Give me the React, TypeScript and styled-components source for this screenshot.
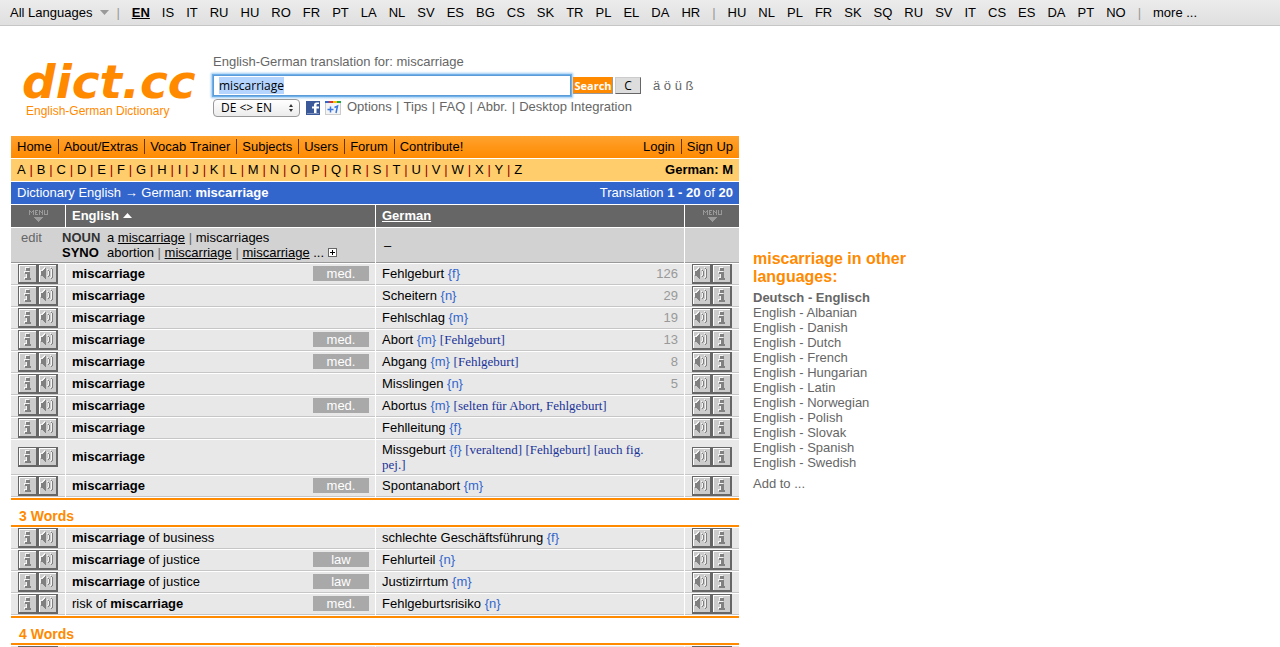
import React, { useEffect, useRef } from 'react';
import styled, { createGlobalStyle, css } from 'styled-components';

const Global = createGlobalStyle`
  * { box-sizing: border-box; }
  body {
    margin: 0;
    background: #fff;
    color: #000;
    font: 13px/15px "Liberation Sans", Arial, sans-serif;
    overflow-x: hidden;
  }
  a { color: inherit; text-decoration: none; }
`;

const LangBar = styled.nav`
  display: flex;
  align-items: center;
  gap: 12px;
  height: 26px;
  padding-left: 10px;
  background: linear-gradient(#ececec, #dfdfdf);
  border-bottom: 1px solid #c6c6c6;
  white-space: nowrap;
`;
const AllLanguages = styled.a`
  display: flex;
  align-items: center;
  gap: 8px;
  margin-right: -5px;
`;
const LangLink = styled.a<{ $current?: boolean }>`
  ${(p) => p.$current && css`font-weight: bold; text-decoration: underline;`}
`;
const BarMark = styled.span`color: #999;`;

const Header = styled.header`
  display: flex;
  gap: 16px;
  padding: 28px 0 18px 22px;
  color: #666;
`;
const Brand = styled.a`
  width: 175px;
  color: #ff8a00;
`;
const LogoName = styled.div`
  padding-top: 6px;
  font: italic bold 47px/44px "DejaVu Sans", Verdana, sans-serif;
  white-space: nowrap;
`;
const LogoNote = styled.div`
  padding-left: 4px;
  font-size: 12px;
  line-height: 14px;
`;
const SearchForm = styled.form`
  display: flex;
  flex-direction: column;
`;
const SearchRow = styled.div`
  display: flex;
  align-items: center;
  height: 25px;
  margin-top: 4px;
`;
const SearchInput = styled.input`
  width: 358px;
  height: 21px;
  padding: 0 5px;
  border: 1px solid #5a9bd8;
  outline: none;
  box-shadow: 0 0 0 1px #6fb0e8, 0 0 2px 2px #9ccaf2;
  font: 12px "Open Sans", "Lucida Grande", sans-serif;
  color: #000;
  &::selection { background: #b5d5ff; color: #000; }
`;
const FormButton = styled.button<{ $primary?: boolean }>`
  height: 17px;
  padding: 0;
  border: 1px solid;
  border-color: #ccc #666 #666 #ccc;
  background: #ddd;
  color: #000;
  width: 26px;
  margin-left: 2px;
  font: 12px/15px "Open Sans", "Lucida Grande", sans-serif;
  ${(p) => p.$primary && css`
    width: 40px;
    border-color: #ff8a00 #999 #999 #ff8a00;
    background: #ff8a00;
    color: #fff;
    font-size: 11px;
    font-weight: bold;
  `}
`;
const Umlauts = styled.span`margin-left: 12px;`;
const OptionsRow = styled.div`
  display: flex;
  align-items: center;
  height: 19px;
  gap: 5px;
`;
const SelectWrap = styled.span`
  position: relative;
  display: flex;
  margin-right: 1px;
`;
const DirectionSelect = styled.select`
  appearance: none;
  width: 87px;
  height: 18px;
  padding: 0 7px;
  border: 1px solid #999;
  border-radius: 4px;
  background: linear-gradient(#fff, #ececec);
  font: 12px/16px "Open Sans", "Lucida Grande", sans-serif;
  color: #000;
`;
const SelectArrows = styled.svg`
  position: absolute;
  right: 6px;
  top: 5px;
  pointer-events: none;
`;
const OptionLinks = styled.span`
  display: flex;
  justify-content: space-between;
  width: 286px;
  padding: 0 0 2px 1px;
`;

const Body = styled.div`
  display: flex;
  align-items: flex-start;
  padding-left: 11px;
  gap: 14px;
`;
const Main = styled.main`
  flex: 0 0 728px;
  display: flex;
  flex-direction: column;
  gap: 1px;
`;
const Strip = styled.div<{ $tone: 'nav' | 'alpha' | 'title' }>`
  display: flex;
  align-items: center;
  justify-content: space-between;
  height: 22px;
  padding: 0 6px 1px;
  ${(p) => p.$tone === 'nav' && css`background: linear-gradient(#ffa22e, #ff8a00);`}
  ${(p) => p.$tone === 'alpha' && css`background: #ffcd6b;`}
  ${(p) => p.$tone === 'title' && css`background: #36c; color: #fff;`}
`;
const NavGroup = styled.nav`
  display: flex;
  white-space: pre;
`;
const Letters = styled.nav`
  display: flex;
  justify-content: space-between;
  width: 506px;
`;
const NavLink = styled.a`
  & + & {
    margin-left: 6px;
    padding-left: 5px;
    border-left: 1px solid #663700;
  }
`;
const Red = styled.span`color: #900;`;

const ResultTable = styled.table`
  width: 100%;
  table-layout: fixed;
  border-collapse: separate;
  border-spacing: 0;
`;
const MenuCol = styled.col`width: 54px;`;
const MenuColRight = styled.col`width: 55px;`;
const TermCol = styled.col`width: 310px;`;
const HeadCell = styled.th`
  height: 23px;
  padding: 0 6px 2px;
  background: #666;
  border-bottom: 1px solid #fff;
  color: #fff;
  text-align: left;
  & + & { border-left: 1px solid #fff; }
`;
const Row = styled.tr`
  & > td {
    height: 22px;
    padding: 0 6px;
    background: #e8e8e8;
    border-bottom: 1px solid #fff;
    box-shadow: inset 0 -1px #c6c6c6;
  }
  & > td + td { border-left: 1px solid #fff; }
`;
const FormsRow = styled(Row)`
  & > td {
    height: 36px;
    background: #d2d2d2;
    box-shadow: inset 0 -1px #999;
  }
`;
const Dash = styled.span`padding-left: 2px;`;
const Forms = styled.div`
  display: grid;
  grid-template-columns: 41px 45px 1fr;
  padding: 2px 0 3px 4px;
`;
const FormKey = styled.b<{ $soft?: boolean }>`
  color: ${(p) => (p.$soft ? '#333' : '#000')};
`;
const Muted = styled.span`color: #666;`;
const Under = styled.a`text-decoration: underline;`;
const TermLine = styled.div`
  display: flex;
  align-items: center;
  justify-content: space-between;
  padding-bottom: 2px;
`;
const GermanText = styled.div<{ $tall?: boolean }>`
  padding: ${(p) => (p.$tall ? '2px 0 1px' : '0')};
  margin-right: ${(p) => (p.$tall ? '20px' : '0')};
`;
const Tag = styled.span`
  width: 56px;
  height: 15px;
  background: #a9a9a9;
  color: #fff;
  text-align: center;
`;
const Gender = styled.span`color: #36c;`;
const Note = styled.span`
  color: #1a3399;
  font-family: "Liberation Serif", "Times New Roman", serif;
`;
const Votes = styled.span`color: #999;`;
const Buttons = styled.div`
  display: flex;
  padding: 0 0 1px 1px;
`;
const IconButton = styled.button`
  display: block;
  width: 20px;
  height: 20px;
  padding: 0;
  border: 0;
  background: none;
`;
const MenuSvg = styled.svg`
  display: block;
  margin: 2px auto 0;
`;
const GroupTitle = styled.h2`
  margin: 0;
  height: 29px;
  padding: 8px 8px 0;
  border: solid #ff8a00;
  border-width: 2px 0;
  color: #ff8a00;
  font-size: 14px;
  line-height: 16px;
`;
const GroupCell = styled.td`padding: 0 0 1px;`;

const Side = styled.aside`
  width: 180px;
  margin-top: 114px;
  color: #666;
`;
const SideTitle = styled.h2`
  margin: 0 0 4px;
  color: #ff8a00;
  font-size: 16px;
  line-height: 18px;
`;
const SideList = styled.ul`
  margin: 0 0 6px;
  padding: 0;
  list-style: none;
`;

const firstLangs = 'EN IS IT RU HU RO FR PT LA NL SV ES BG CS SK TR PL EL DA HR'.split(' ');
const moreLangs = 'HU NL PL FR SK SQ RU SV IT CS ES DA PT NO'.split(' ');
const letters = 'ABCDEFGHIJKLMNOPQRSTUVWXYZ'.split('');
const navItems = ['Home', 'About/Extras', 'Vocab Trainer', 'Subjects', 'Users', 'Forum', 'Contribute!'];
const options = ['Options', 'Tips', 'FAQ', 'Abbr.', 'Desktop Integration'];
const others = 'Albanian Danish Dutch French Hungarian Latin Norwegian Polish Slovak Spanish Swedish'.split(' ');

interface Entry {
  before?: string;
  after?: string;
  tag?: string;
  de: string;
  g: string;
  note?: string;
  votes?: number;
  tall?: boolean;
}
const single: Entry[] = [
  { tag: 'med.', de: 'Fehlgeburt', g: 'f', votes: 126 },
  { de: 'Scheitern', g: 'n', votes: 29 },
  { de: 'Fehlschlag', g: 'm', votes: 19 },
  { tag: 'med.', de: 'Abort', g: 'm', note: '[Fehlgeburt]', votes: 13 },
  { tag: 'med.', de: 'Abgang', g: 'm', note: '[Fehlgeburt]', votes: 8 },
  { de: 'Misslingen', g: 'n', votes: 5 },
  { tag: 'med.', de: 'Abortus', g: 'm', note: '[selten für Abort, Fehlgeburt]' },
  { de: 'Fehlleitung', g: 'f' },
  { de: 'Missgeburt', g: 'f', note: '[veraltend] [Fehlgeburt] [auch fig. pej.]', tall: true },
  { tag: 'med.', de: 'Spontanabort', g: 'm' },
];
const threeWords: Entry[] = [
  { after: ' of business', de: 'schlechte Geschäftsführung', g: 'f' },
  { after: ' of justice', tag: 'law', de: 'Fehlurteil', g: 'n' },
  { after: ' of justice', tag: 'law', de: 'Justizirrtum', g: 'm' },
  { before: 'risk of ', tag: 'med.', de: 'Fehlgeburtsrisiko', g: 'n' },
];

// Bitmap icons: every "#" becomes one filled pixel.
const pixels = (rows: string[]) =>
  rows
    .flatMap((r, y) => r.split('').map((c, x) => (c === '#' ? `M${x} ${y}h1v1h-1z` : '')))
    .join('');

const menuShape = pixels([
  '#...#.###.#..#.#..#',
  '##.##.#...##.#.#..#',
  '#.#.#.##..#.##.#..#',
  '#...#.#...#..#.#..#',
  '#...#.###.#..#.####',
  '',
  '',
  '.....#########',
  '......#######',
  '.......#####',
  '........###',
  '.........#',
]);
const infoShape = pixels([
  '',
  '',
  '',
  '',
  '........####',
  '........####',
  '........####',
  '',
  '.......#####',
  '.......#####',
  '.........###',
  '.........###',
  '.........###',
  '.........###',
  '.......######',
  '.......######',
]);
const soundShape = pixels([
  '',
  '',
  '',
  '',
  '.......#.....#',
  '......##......#',
  '.....###..#...#',
  '...#####...#..#',
  '...#####...#..#',
  '...#####...#..#',
  '...#####...#..#',
  '...#####...#..#',
  '.....###..#...#',
  '......##......#',
  '.......#.....#',
]);

const BitmapIcon = ({ shape }: { shape: string }) => (
  <svg width="20" height="20" shapeRendering="crispEdges" aria-hidden="true">
    <rect width="20" height="20" fill="#666" />
    <rect x="1" y="1" width="17" height="17" fill="#fff" />
    <rect x="2" y="2" width="16" height="16" fill="#ccc" />
    <path d={shape} fill="#f4f4f4" transform="translate(-1 -1)" />
    <path d={shape} fill="#808080" />
  </svg>
);
const MenuIcon = () => (
  <MenuSvg width="19" height="12" shapeRendering="crispEdges" role="img" aria-label="Menu">
    <path d={menuShape} fill="#999" />
  </MenuSvg>
);
const InfoButton = () => <IconButton type="button" aria-label="Info"><BitmapIcon shape={infoShape} /></IconButton>;
const SoundButton = () => <IconButton type="button" aria-label="Listen"><BitmapIcon shape={soundShape} /></IconButton>;

const EntryRow = ({ e }: { e?: Entry }) => (
  <Row>
    <td><Buttons><InfoButton /><SoundButton /></Buttons></td>
    <td>
      {e && (
        <TermLine>
          <span>{e.before}<b>miscarriage</b>{e.after}</span>
          {e.tag && <Tag>{e.tag}</Tag>}
        </TermLine>
      )}
    </td>
    <td>
      {e && (
        <TermLine>
          <GermanText $tall={e.tall}>
            {e.de} <Gender>{`{${e.g}}`}</Gender>{e.note && <> <Note>{e.note}</Note></>}
          </GermanText>
          {e.votes && <Votes>{e.votes}</Votes>}
        </TermLine>
      )}
    </td>
    <td><Buttons><SoundButton /><InfoButton /></Buttons></td>
  </Row>
);
const GroupHeading = ({ title }: { title: string }) => (
  <tr><GroupCell colSpan={4}><GroupTitle>{title}</GroupTitle></GroupCell></tr>
);

export default function App() {
  const input = useRef<HTMLInputElement>(null);
  useEffect(() => {
    input.current?.focus();
    input.current?.select();
  }, []);
  return (
    <>
      <Global />
      <LangBar>
        <AllLanguages href="#">
          All Languages
          <svg width="9" height="5" aria-hidden="true"><path d="M0 0h9L4.500 5z" fill="#999" /></svg>
        </AllLanguages>
        <BarMark>|</BarMark>
        {firstLangs.map((l) => <LangLink key={l} href="#" $current={l === 'EN'}>{l}</LangLink>)}
        <BarMark>|</BarMark>
        {moreLangs.map((l) => <LangLink key={l} href="#">{l}</LangLink>)}
        <BarMark>|</BarMark>
        <LangLink href="#">more ...</LangLink>
      </LangBar>
      <Header>
        <Brand href="#">
          <LogoName>dict.cc</LogoName>
          <LogoNote>English-German Dictionary</LogoNote>
        </Brand>
        <SearchForm onSubmit={(ev) => ev.preventDefault()}>
          <label htmlFor="term">English-German translation for: miscarriage</label>
          <SearchRow>
            <SearchInput id="term" ref={input} defaultValue="miscarriage" />
            <FormButton $primary>Search</FormButton>
            <FormButton type="reset">C</FormButton>
            <Umlauts>ä ö ü ß</Umlauts>
          </SearchRow>
          <OptionsRow>
            <SelectWrap>
              <DirectionSelect aria-label="Direction"><option>DE &lt;&gt; EN</option></DirectionSelect>
              <SelectArrows width="6" height="8" aria-hidden="true">
                <path d="M3 0l2 3H1zM3 8l2-3H1z" fill="#333" />
              </SelectArrows>
            </SelectWrap>
            <svg width="14" height="14" role="img" aria-label="Facebook">
              <rect width="14" height="14" fill="#3b5998" />
              <path d="M13 3h-1.500Q10.500 3 10.500 4v1.500H13v2h-2.500V13H8V7.500H6v-2h2V4Q8 1.500 10.500 1.500H13z" fill="#fff" />
              <path d="M1 12.500h12" stroke="#8295bf" />
            </svg>
            <svg width="16" height="14" role="img" aria-label="+1">
              <rect x=".5" y=".5" width="15" height="13" fill="#f4f4f4" stroke="#ccc" />
              <path d="M0 1h4" stroke="#36c" strokeWidth="2" />
              <path d="M4 1h4" stroke="#d33" strokeWidth="2" />
              <path d="M8 1h4" stroke="#fb0" strokeWidth="2" />
              <path d="M12 1h4" stroke="#2a4" strokeWidth="2" />
              <path d="M2.500 8.500h6M5.500 5.500v6M9.500 6.500l3-1.500-1.500 7" fill="none" stroke="#3a78e0" strokeWidth="1.500" />
            </svg>
            <OptionLinks>
              {options.flatMap((o, i) => [
                i > 0 && <span key={`${o}-mark`}>|</span>,
                <a key={o} href="#">{o}</a>,
              ])}
            </OptionLinks>
          </OptionsRow>
        </SearchForm>
      </Header>
      <Body>
        <Main>
          <Strip $tone="nav">
            <NavGroup>{navItems.map((n) => <NavLink key={n} href="#">{n}</NavLink>)}</NavGroup>
            <NavGroup><NavLink href="#">Login</NavLink><NavLink href="#">Sign Up</NavLink></NavGroup>
          </Strip>
          <Strip $tone="alpha">
            <Letters>
              {letters.flatMap((l, i) => [
                i > 0 && <Red key={`${l}-mark`}>|</Red>,
                <a key={l} href="#">{l}</a>,
              ])}
            </Letters>
            <b>German: M</b>
          </Strip>
          <Strip $tone="title">
            <span>Dictionary English → German: <b>miscarriage</b></span>
            <span>Translation <b>1 - 20</b> of <b>20</b></span>
          </Strip>
          <ResultTable>
            <colgroup>
              <MenuCol /><TermCol /><col /><MenuColRight />
            </colgroup>
            <thead>
              <tr>
                <HeadCell><MenuIcon /></HeadCell>
                <HeadCell>English <svg width="9" height="7" aria-hidden="true"><path d="M0 5h9L4.500 0z" fill="#fff" /></svg></HeadCell>
                <HeadCell><Under href="#">German</Under></HeadCell>
                <HeadCell><MenuIcon /></HeadCell>
              </tr>
            </thead>
            <tbody>
              <FormsRow>
                <td colSpan={2}>
                  <Forms>
                    <Muted>edit</Muted>
                    <FormKey $soft>NOUN</FormKey>
                    <span>a <Under href="#">miscarriage</Under> <Muted>|</Muted> miscarriages</span>
                    <span />
                    <FormKey>SYNO</FormKey>
                    <span>
                      abortion <Muted>|</Muted> <Under href="#">miscarriage</Under> <Muted>|</Muted> <Under href="#">miscarriage</Under> ...{' '}
                      <svg width="9" height="9" shapeRendering="crispEdges" role="img" aria-label="expand">
                        <rect width="9" height="9" fill="#666" />
                        <rect x="1" y="1" width="7" height="7" fill="#fff" />
                        <path d="M2 4h5v1H2zM4 2h1v5H4z" fill="#000" />
                      </svg>
                    </span>
                  </Forms>
                </td>
                <td><Dash>–</Dash></td>
                <td />
              </FormsRow>
              {single.map((e, i) => <EntryRow key={i} e={e} />)}
              <GroupHeading title="3 Words" />
              {threeWords.map((e, i) => <EntryRow key={i} e={e} />)}
              <GroupHeading title="4 Words" />
              <EntryRow />
            </tbody>
          </ResultTable>
        </Main>
        <Side>
          <SideTitle>miscarriage in other languages:</SideTitle>
          <SideList>
            <li><b><a href="#">Deutsch - Englisch</a></b></li>
            {others.map((o) => <li key={o}><a href="#">English - {o}</a></li>)}
          </SideList>
          <a href="#">Add to ...</a>
        </Side>
      </Body>
    </>
  );
}
